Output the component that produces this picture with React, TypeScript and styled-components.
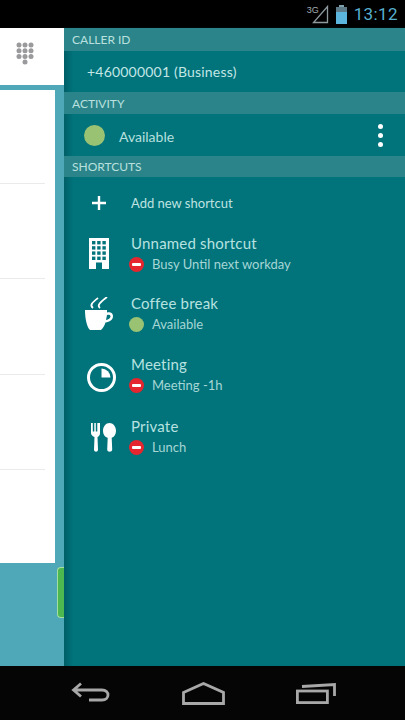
import React from 'react'
import styled, { createGlobalStyle } from 'styled-components'

const GlobalStyle = createGlobalStyle`
    html, body {
        margin: 0;
        padding: 0;
        background: #000;
    }
    * {
        box-sizing: border-box;
    }
`

type Status = 'busy' | 'available'

interface IShortcut {
    title: string
    status: Status
    label: string
    icon: React.ReactNode
    height: number
}

function BuildingIcon() {
    const windows = []
    for (let row = 0; row < 4; row++) {
        for (let col = 0; col < 3; col++) {
            windows.push(<rect key={`${row}-${col}`} x={3 + col * 5.2} y={3 + row * 5.2} width={3.4} height={3.4} fill='#00737b' />)
        }
    }
    return <svg width='20' height='31' viewBox='0 0 20 31'>
        <rect width='20' height='31' fill='#fff' />
        {windows}
        <rect x='7' y='24.5' width='6' height='6.5' fill='#00737b' />
    </svg>
}

function CoffeeIcon() {
    return <svg width='28' height='34' viewBox='0 0 28 34'>
        <path d='M0 13h22v2.500c3-1 6 0 6 3.500 0 4-3.500 6-7.500 6.500-1 3-2.500 5.500-4.500 7.500H5C2 30 0 22 0 13z' fill='#fff' />
        <path d='M22 18c2-.6 3.500 0 3.500 1.500S23.500 22.500 21 23z' fill='#00737b' />
        <path d='M8 11c-4-3 0-6 5-10' stroke='#fff' strokeWidth='1.800' fill='none' />
        <path d='M15 11c-4-3 2-7 7-11' stroke='#fff' strokeWidth='1.800' fill='none' />
    </svg>
}

function ClockIcon() {
    return <svg width='34' height='34' viewBox='0 0 34 34'>
        <circle cx='19.5' cy='19.5' r='13' fill='none' stroke='#fff' strokeWidth='3' />
        <path d='M19.500 10.500a9 9 0 0 1 9 9h-9z' fill='#fff' />
    </svg>
}

function CutleryIcon() {
    return <svg width='34' height='30' viewBox='0 0 34 30'>
        <path d='M9 1h1.800v8.500h1.500V1h1.500v8.500h1.500V1H18v10c0 2-1 3.500-2.500 4l.5 12.500c0 3-4 3-4 0l.5-12.500C11 14.500 9 13 9 11z' fill='#fff' />
        <path d='M27.500 1c3.500 0 6.500 3.500 6.500 8 0 3.500-2 6-4.300 6.800l.5 11.700c0 3-5 3-5 0l.5-11.700C23 15 21 12.500 21 9c0-4.500 3-8 6.500-8z' fill='#fff' />
    </svg>
}

const shortcuts: IShortcut[] = [
    { title: 'Unnamed shortcut', status: 'busy', label: 'Busy Until next workday', icon: <BuildingIcon />, height: 61 },
    { title: 'Coffee break', status: 'available', label: 'Available', icon: <CoffeeIcon />, height: 60 },
    { title: 'Meeting', status: 'busy', label: 'Meeting -1h', icon: <ClockIcon />, height: 62 },
    { title: 'Private', status: 'busy', label: 'Lunch', icon: <CutleryIcon />, height: 62 },
]

export default function App() {
    return <Screen>
        <GlobalStyle />
        <StatusBar>
            <Signal>
                <NetworkLabel>3G</NetworkLabel>
                <svg width='17' height='19' viewBox='0 0 17 19'>
                    <path d='M15.500 1.500v16H1.500z' fill='none' stroke='#8d9a9e' strokeWidth='1.300' />
                </svg>
            </Signal>
            <svg width='11' height='19' viewBox='0 0 11 19'>
                <rect x='3' y='0' width='5' height='2' fill='#7ea0ad' />
                <rect x='0' y='2' width='11' height='17' fill='#5c7a87' />
                <rect x='0' y='7' width='11' height='12' fill='#5cb5dc' />
            </svg>
            <Clock>13:12</Clock>
        </StatusBar>

        <Body>
            <LeftPanel>
                <DialTab>
                    <svg width='18' height='23' viewBox='0 0 18 23'>
                        {[0, 1, 2, 3].map(row => [0, 1, 2].map(col => (
                            row < 3 || col === 1
                                ? <circle key={`${row}-${col}`} cx={3 + col * 6} cy={3 + row * 5.7} r='2.500' fill='#9a9a9d' />
                                : null
                        )))}
                    </svg>
                </DialTab>
                <ListArea>
                    <ContactList>
                        {[94, 95, 96, 95, 93].map((height, index) => (
                            <ContactRow key={index} $height={height} $last={index === 4} />
                        ))}
                    </ContactList>
                </ListArea>
                <GreenHandle />
            </LeftPanel>

            <Drawer>
                <SectionHeader $height={23}>CALLER ID</SectionHeader>
                <CallerRow>+460000001 (Business)</CallerRow>
                <SectionHeader $height={22}>ACTIVITY</SectionHeader>
                <ActivityRow>
                    <ActivityDot />
                    <ActivityLabel>Available</ActivityLabel>
                    <MoreButton>
                        <MoreDot />
                        <MoreDot />
                        <MoreDot />
                    </MoreButton>
                </ActivityRow>
                <SectionHeader $height={21}>SHORTCUTS</SectionHeader>

                <AddRow>
                    <IconSlot>
                        <svg width='14' height='14' viewBox='0 0 14 14'>
                            <path d='M7 0v14M0 7h14' stroke='#fff' strokeWidth='2.400' />
                        </svg>
                    </IconSlot>
                    <AddLabel>Add new shortcut</AddLabel>
                </AddRow>

                {shortcuts.map(shortcut => (
                    <ShortcutRow key={shortcut.title} $height={shortcut.height}>
                        <IconSlot>{shortcut.icon}</IconSlot>
                        <div>
                            <ShortcutTitle>{shortcut.title}</ShortcutTitle>
                            <ShortcutStatus>
                                <StatusBadge $status={shortcut.status} />
                                <span>{shortcut.label}</span>
                            </ShortcutStatus>
                        </div>
                    </ShortcutRow>
                ))}
            </Drawer>
        </Body>

        <NavBar>
            <svg width='40' height='22' viewBox='0 0 40 22'>
                <path d='M10 1.500 2.500 8 10 14.500M3 8h28c8 0 8 10 0 10H18' fill='none' stroke='#a8a8a8' strokeWidth='2.800' />
            </svg>
            <svg width='43' height='23' viewBox='0 0 43 23'>
                <path d='M1.500 10.500 21.500 1.500l20 9v11h-40z' fill='none' stroke='#a8a8a8' strokeWidth='2.800' />
            </svg>
            <svg width='40' height='21' viewBox='0 0 40 21'>
                <rect x='1.400' y='8' width='30' height='11.600' fill='none' stroke='#a8a8a8' strokeWidth='2.800' />
                <path d='M6 3.500 L38.500 1.500V13' fill='none' stroke='#a8a8a8' strokeWidth='2.800' />
            </svg>
        </NavBar>
    </Screen>
}

const Screen = styled.div`
    display: flex;
    flex-direction: column;
    width: 405px;
    height: 720px;
    overflow: hidden;
    font-family: Lato, 'Open Sans', sans-serif;
`

const StatusBar = styled.div`
    display: flex;
    align-items: center;
    justify-content: flex-end;
    gap: 7px;
    height: 28px;
    padding: 0 7px 0 0;
    background: #000;
`

const Signal = styled.div`
    position: relative;
    display: flex;
    width: 21px;
    justify-content: flex-end;
`

const NetworkLabel = styled.span`
    position: absolute;
    top: 0;
    left: -1px;
    font-family: 'Liberation Sans', sans-serif;
    font-size: 9px;
    line-height: 11px;
    color: #a0acb0;
`

const Clock = styled.span`
    font-family: Roboto, sans-serif;
    font-size: 17px;
    letter-spacing: 0.4px;
    color: #57afd0;
`

const Body = styled.div`
    display: flex;
    height: 638px;
`

const LeftPanel = styled.div`
    position: relative;
    display: flex;
    flex-direction: column;
    width: 64px;
    background: #4fa8b7;
`

const DialTab = styled.div`
    display: flex;
    align-items: center;
    height: 57px;
    padding: 0 0 7px 16px;
    background: #fff;
`

const ListArea = styled.div`
    padding: 5px 9px 0 0;
`

const ContactList = styled.div`
    display: flex;
    flex-direction: column;
    background: #fff;
`

const ContactRow = styled.div<{ $height: number; $last: boolean }>`
    height: ${props => props.$height}px;
    margin-right: 10px;
    border-bottom: ${props => props.$last ? '0' : '1px solid #e9eaea'};
`

const GreenHandle = styled.div`
    position: absolute;
    top: 539px;
    right: 0;
    width: 7px;
    height: 51px;
    border: 1px solid #a4dfa0;
    border-right: 0;
    border-radius: 4px 0 0 4px;
    background: #4cb84f;
`

const Drawer = styled.div`
    flex: 1;
    display: flex;
    flex-direction: column;
    background: linear-gradient(90deg, #005e66 0, #00737b 9px);
    box-shadow: -1px 0 2px rgba(0, 60, 70, 0.4);
`

const SectionHeader = styled.div<{ $height: number }>`
    display: flex;
    align-items: center;
    height: ${props => props.$height}px;
    padding-left: 8px;
    background: #2b8489;
    font-size: 12px;
    color: #b9e0df;
`

const CallerRow = styled.div`
    display: flex;
    align-items: center;
    height: 41px;
    padding-left: 23px;
    font-size: 14px;
    letter-spacing: 0.2px;
    color: #c4e6e5;
`

const ActivityRow = styled.div`
    display: flex;
    align-items: center;
    height: 42px;
    padding: 0 22px 0 20px;
`

const ActivityDot = styled.div`
    width: 21px;
    height: 21px;
    border-radius: 50%;
    background: #9ac273;
`

const ActivityLabel = styled.span`
    flex: 1;
    margin-left: 14px;
    padding-top: 3px;
    font-size: 14px;
    color: #b8e0de;
`

const MoreButton = styled.div`
    display: flex;
    flex-direction: column;
    gap: 4px;
`

const MoreDot = styled.span`
    width: 5px;
    height: 5px;
    border-radius: 50%;
    background: #fff;
`

const IconSlot = styled.div`
    display: flex;
    align-items: center;
    justify-content: center;
    flex: none;
    width: 67px;
    padding-left: 3px;
`

const AddRow = styled.div`
    display: flex;
    align-items: center;
    height: 46px;
    padding-top: 5px;
`

const AddLabel = styled.span`
    font-size: 13px;
    color: #bfe3e1;
`

const ShortcutRow = styled.div<{ $height: number }>`
    display: flex;
    align-items: center;
    height: ${props => props.$height}px;
`

const ShortcutTitle = styled.div`
    font-size: 15px;
    line-height: 21px;
    letter-spacing: 0.2px;
    color: #b8e2e0;
`

const ShortcutStatus = styled.div`
    display: flex;
    align-items: center;
    gap: 8px;
    margin-left: -2px;
    font-size: 13px;
    line-height: 21px;
    color: #a6d6d5;
`

const StatusBadge = styled.span<{ $status: Status }>`
    position: relative;
    width: 15px;
    height: 15px;
    border-radius: 50%;
    background: ${props => props.$status === 'busy' ? '#e5262f' : '#9ac273'};

    &::after {
        content: '';
        display: ${props => props.$status === 'busy' ? 'block' : 'none'};
        position: absolute;
        top: 6px;
        left: 3px;
        width: 9px;
        height: 3px;
        border-radius: 1px;
        background: #fff;
    }
`

const NavBar = styled.div`
    display: flex;
    align-items: center;
    gap: 71px;
    height: 54px;
    padding: 0 0 0 71px;
    background: #050505;
`
